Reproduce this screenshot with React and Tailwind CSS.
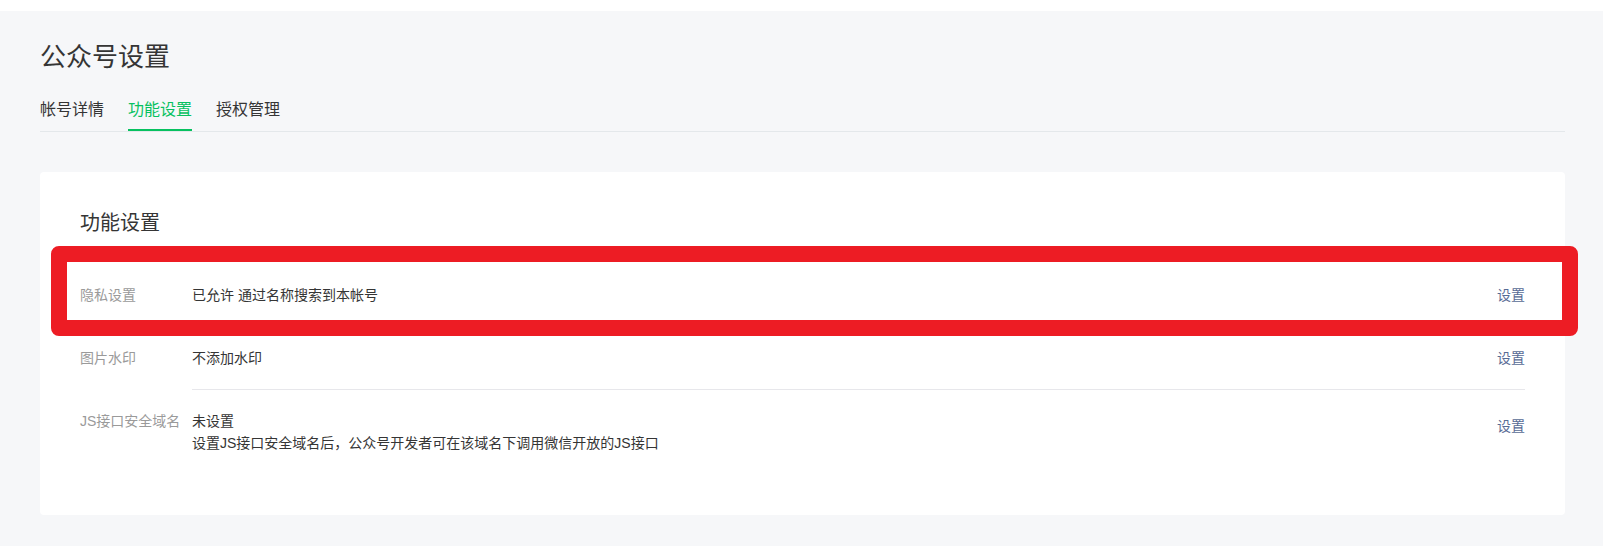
import React from 'react';

const rows = [
    { label: "隐私设置", lines: ["已允许 通过名称搜索到本帐号"] },
    { label: "图片水印", lines: ["不添加水印"] },
    { label: "JS接口安全域名", lines: ["未设置", "设置JS接口安全域名后，公众号开发者可在该域名下调用微信开放的JS接口"] },
];

const tabs = ["帐号详情", "功能设置", "授权管理"];

const App = () => {
    return (
        <div
            className="relative flex min-h-[546px] flex-col bg-white pt-[11px]"
            style={{ fontFamily: '"Liberation Sans", "Noto Sans CJK SC", sans-serif' }}
        >
            <div className="flex-1 bg-[#f6f7f9] pl-10 pr-[38px] pt-[28px] pb-[22px]">
                {/* Header */}
                <h1 className="text-[26px] leading-[36px] text-[#353535]">公众号设置</h1>

                {/* Tabs */}
                <div className="mt-[23px] flex gap-6 border-b border-[#e4e8eb]">
                    {tabs.map((t, i) => (
                        <div
                            key={t}
                            className={
                                i === 1
                                    ? "pb-[7px] border-b-2 border-[#07c160] text-[16px] leading-[24px] text-[#07c160]"
                                    : "pb-[7px] border-b-2 border-transparent text-[16px] leading-[24px] text-[#353535]"
                            }
                        >
                            {t}
                        </div>
                    ))}
                </div>

                {/* Card */}
                <div className="mt-10 rounded bg-white px-10 pt-[37px] pb-[41px]">
                    <h2 className="text-[20px] leading-[28px] text-[#353535]">功能设置</h2>
                    <div className="mt-[27px]">
                        {rows.map((row, i) => (
                            <div key={row.label} className="flex text-[14px] leading-[22px]">
                                <div className="w-[112px] shrink-0 py-5 text-[#9a9a9a]">{row.label}</div>
                                <div
                                    className={
                                        i < rows.length - 1
                                            ? "flex flex-1 items-center border-b border-[#e7e7eb] py-5"
                                            : "flex flex-1 items-start py-5"
                                    }
                                >
                                    <div className="flex-1 text-[#353535]">
                                        {row.lines.map((l) => (
                                            <div key={l}>{l}</div>
                                        ))}
                                    </div>
                                    <a
                                        href="#"
                                        className={i < rows.length - 1 ? "text-[#576b95]" : "mt-[5px] text-[#576b95]"}
                                    >
                                        设置
                                    </a>
                                </div>
                            </div>
                        ))}
                    </div>
                </div>
            </div>

            {/* red highlight annotation */}
            <div className="pointer-events-none absolute left-[51px] top-[246px] h-[90px] w-[1527px] rounded-[8px] border-[16px] border-[#ed1c24]" />
        </div>
    );
};

export default App;
